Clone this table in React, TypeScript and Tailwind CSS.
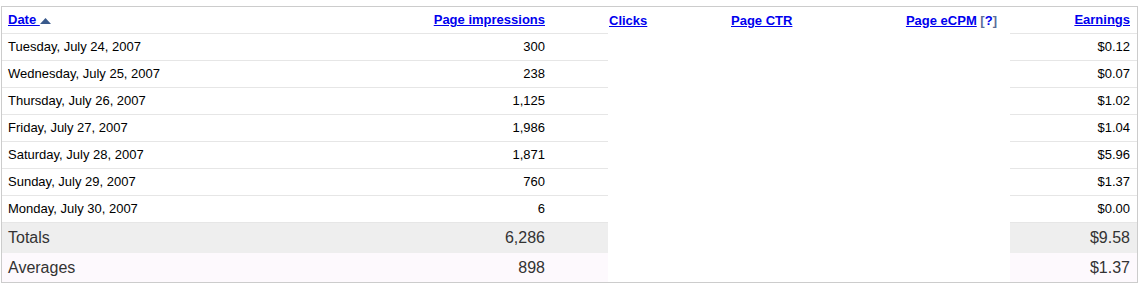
import React from "react";

const rows: [string, string, string][] = [
  ["Tuesday, July 24, 2007", "300", "$0.12"],
  ["Wednesday, July 25, 2007", "238", "$0.07"],
  ["Thursday, July 26, 2007", "1,125", "$1.02"],
  ["Friday, July 27, 2007", "1,986", "$1.04"],
  ["Saturday, July 28, 2007", "1,871", "$5.96"],
  ["Sunday, July 29, 2007", "760", "$1.37"],
  ["Monday, July 30, 2007", "6", "$0.00"],
];

const link = "text-[#0000ee] underline font-bold";

export default function App() {
  return (
    <div className="bg-white w-[1145px] h-[283px] pt-[6px] pl-[1px] font-['Liberation_Sans',Arial,sans-serif] text-[13px] text-black">
      <div className="w-[1137px] border border-[#cccccc] flex flex-col">
        {/* header */}
        <div className="flex h-[27px]">
          <div className="w-[606px] flex items-center justify-between border-b border-[#e6e6e6] pl-[6px] pr-[63px]">
            <span className="flex items-center">
              <span className={link}>Date&nbsp;</span>
              <svg width="11" height="6" viewBox="0 0 11 6" className="mt-[1px]">
                <polygon points="0,6 11,6 5.5,0" fill="#3a5a8c" />
              </svg>
            </span>
            <span className={link}>Page impressions</span>
          </div>
          <div className="w-[402px] flex items-center">
            <div className="w-[100px] pl-[1px]">
              <span className={link}>Clicks</span>
            </div>
            <div className="w-[150px] pl-[23px]">
              <span className={link}>Page CTR</span>
            </div>
            <div className="w-[152px] text-right pr-[13px] font-bold">
              <span className={link}>Page eCPM</span>{" "}
              <span className="text-[#5a6e9a]">[</span>
              <span className="text-[#0000ee]">?</span>
              <span className="text-[#5a6e9a]">]</span>
            </div>
          </div>
          <div className="w-[127px] flex items-center justify-end border-b border-[#e6e6e6] pr-[7px]">
            <span className={link}>Earnings</span>
          </div>
        </div>
        {rows.map(([d, p, e]) => (
          <div key={d} className="flex h-[27px]">
            <div className="w-[606px] flex items-center justify-between border-b border-[#e6e6e6] pl-[6px] pr-[63px]">
              <span>{d}</span>
              <span>{p}</span>
            </div>
            <div className="w-[402px]" />
            <div className="w-[127px] flex items-center justify-end border-b border-[#e6e6e6] pr-[7px]">
              <span>{e}</span>
            </div>
          </div>
        ))}
        <div className="flex h-[30px] text-[16px] text-[#333333]">
          <div className="w-[606px] flex items-center justify-between bg-[#eeeeee] pl-[6px] pr-[63px]">
            <span>Totals</span>
            <span>6,286</span>
          </div>
          <div className="w-[402px]" />
          <div className="w-[127px] flex items-center justify-end bg-[#eeeeee] pr-[7px]">
            <span>$9.58</span>
          </div>
        </div>
        <div className="flex h-[29px] text-[16px] text-[#333333]">
          <div className="w-[606px] flex items-center justify-between bg-[#fdf9fd] pl-[6px] pr-[63px]">
            <span>Averages</span>
            <span>898</span>
          </div>
          <div className="w-[402px]" />
          <div className="w-[127px] flex items-center justify-end bg-[#fdf9fd] pr-[7px]">
            <span>$1.37</span>
          </div>
        </div>
      </div>
    </div>
  );
}
